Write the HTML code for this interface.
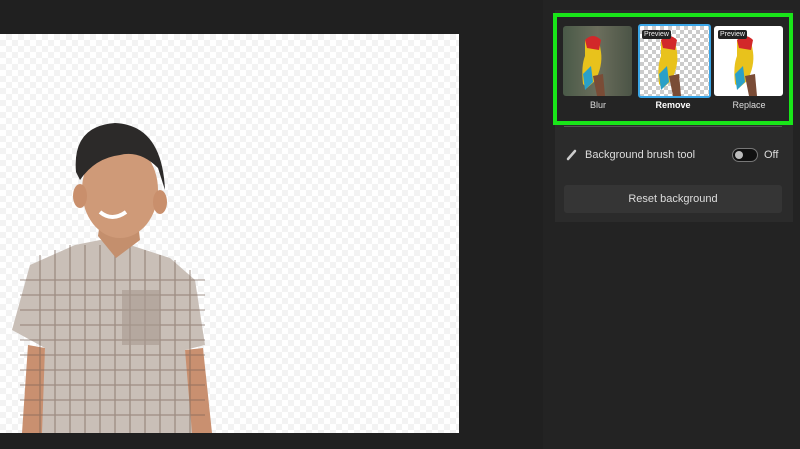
<!DOCTYPE html><html><head><style>
body{margin:0;width:800px;height:449px;background:#202020;position:relative;overflow:hidden;font-family:"Liberation Sans",sans-serif}
.abs{position:absolute}
.canvas{left:0;top:34px;width:459px;height:399px;background-color:#fff;background-image:linear-gradient(45deg,#f3f3f3 25%,transparent 25%,transparent 75%,#f3f3f3 75%),linear-gradient(45deg,#f3f3f3 25%,transparent 25%,transparent 75%,#f3f3f3 75%);background-size:12px 12px;background-position:0 0,6px 6px}
.side{left:543px;top:0;width:257px;height:449px;background:#232323}
.card{left:555px;top:10px;width:238px;height:212px;background:#2b2b2b}
.green{left:553px;top:13px;width:232px;height:104px;border:4px solid #19e619;background:#242424}
.th{top:26px;width:69px;height:70px;border-radius:3px;overflow:hidden}
.lbl{top:100px;width:70px;text-align:center;color:#ddd;font-size:9px}
.pv{position:absolute;left:4px;top:4px;background:#222;color:#eee;font-size:7px;padding:1px 2px;border-radius:2px}
</style></head><body>
<div class="abs canvas"></div>
<svg class="abs" style="left:0;top:34px" width="459" height="399" viewBox="0 34 459 399">
<path d="M12 330 L30 265 L75 245 L100 240 L130 245 L170 258 L195 280 L205 345 L185 350 L195 433 L40 433 L45 348 Z" fill="#c9bfb7"/>
<path d="M22 433 L28 345 L45 348 L42 433 Z M185 350 L203 348 L212 433 L192 433Z" fill="#c99070"/>
<g stroke="#7a6357" stroke-width="1.3" opacity=".55">
<path d="M20 280H205M20 295H205M20 310H205M20 325H205M20 340H205M20 355H205M20 370H205M20 385H205M20 400H205M20 415H205M40 255V433M55 250V433M70 245V433M85 245V433M100 245V433M115 245V433M130 245V433M145 250V433M160 255V433M175 260V433M190 270V433"/></g>
<path d="M122 290 L160 290 L160 345 L122 345Z" fill="#a89a90" opacity=".6"/>
<path d="M98 236 L116 258 L140 240 L138 222 L100 222Z" fill="#c48f6d"/>
<ellipse cx="120" cy="190" rx="38" ry="48" fill="#cf9a78"/>
<ellipse cx="80" cy="196" rx="7" ry="12" fill="#c98f6c"/><ellipse cx="160" cy="202" rx="7" ry="12" fill="#c98f6c"/>
<path d="M76 172 Q72 126 115 123 Q162 125 165 190 L158 168 Q140 150 120 155 Q95 158 80 180Z" fill="#2c2a29"/>
<path d="M100 212 Q112 222 126 212" stroke="#fff" stroke-width="4" fill="none"/>
</svg>
<div class="abs side"></div>
<div class="abs card"></div>
<div class="abs green"></div>
<div class="abs th" style="left:563px;background:linear-gradient(90deg,#4a5a48,#6b6e5c,#4b5446)"></div>
<div class="abs th" style="left:638px;background-color:#fff;background-image:linear-gradient(45deg,#ccc 25%,transparent 25%,transparent 75%,#ccc 75%),linear-gradient(45deg,#ccc 25%,transparent 25%,transparent 75%,#ccc 75%);background-size:8px 8px;background-position:0 0,4px 4px;border:2px solid #3aa6e8;top:24px;width:69px"></div>
<div class="abs th" style="left:714px;background:#fff"></div>
<svg class="abs" style="left:563px;top:26px" width="222" height="70">
<g id="p"><path d="M22 14 Q30 8 36 14 L38 26 Q40 40 32 55 L24 62 L20 58 Q18 40 22 30Z" fill="#e8c21c"/><path d="M22 14 Q30 6 38 14 L36 24 L24 22Z" fill="#d2282a"/><path d="M20 48 L28 40 L30 56 L22 64Z" fill="#2aa0c8"/><path d="M30 50 L40 48 L42 70 L34 70Z" fill="#7a4c36"/></g>
<use href="#p" x="76"/><use href="#p" x="152"/></svg>
<div class="abs pv" style="left:642px;top:30px">Preview</div>
<div class="abs pv" style="left:718px;top:30px">Preview</div>
<div class="abs lbl" style="left:563px">Blur</div>
<div class="abs lbl" style="left:638px;font-weight:bold;color:#fff">Remove</div>
<div class="abs lbl" style="left:714px">Replace</div>
<div class="abs" style="left:564px;top:126px;width:218px;height:1px;background:#555"></div>
<svg class="abs" style="left:566px;top:149px" width="12" height="12"><path d="M2 10 L9 2" stroke="#ccc" stroke-width="2.5" stroke-linecap="round"/></svg>
<div class="abs" style="left:585px;top:149px;color:#ddd;font-size:11px">Background brush tool</div>
<div class="abs" style="left:732px;top:148px;width:24px;height:12px;border:1px solid #777;border-radius:8px;background:#111"></div>
<div class="abs" style="left:735px;top:151px;width:8px;height:8px;border-radius:50%;background:#bbb"></div>
<div class="abs" style="left:764px;top:149px;color:#ddd;font-size:11px">Off</div>
<div class="abs" style="left:564px;top:185px;width:218px;height:28px;background:#353535;border-radius:3px;color:#ddd;font-size:11px;text-align:center;line-height:28px">Reset background</div>
</body></html>
